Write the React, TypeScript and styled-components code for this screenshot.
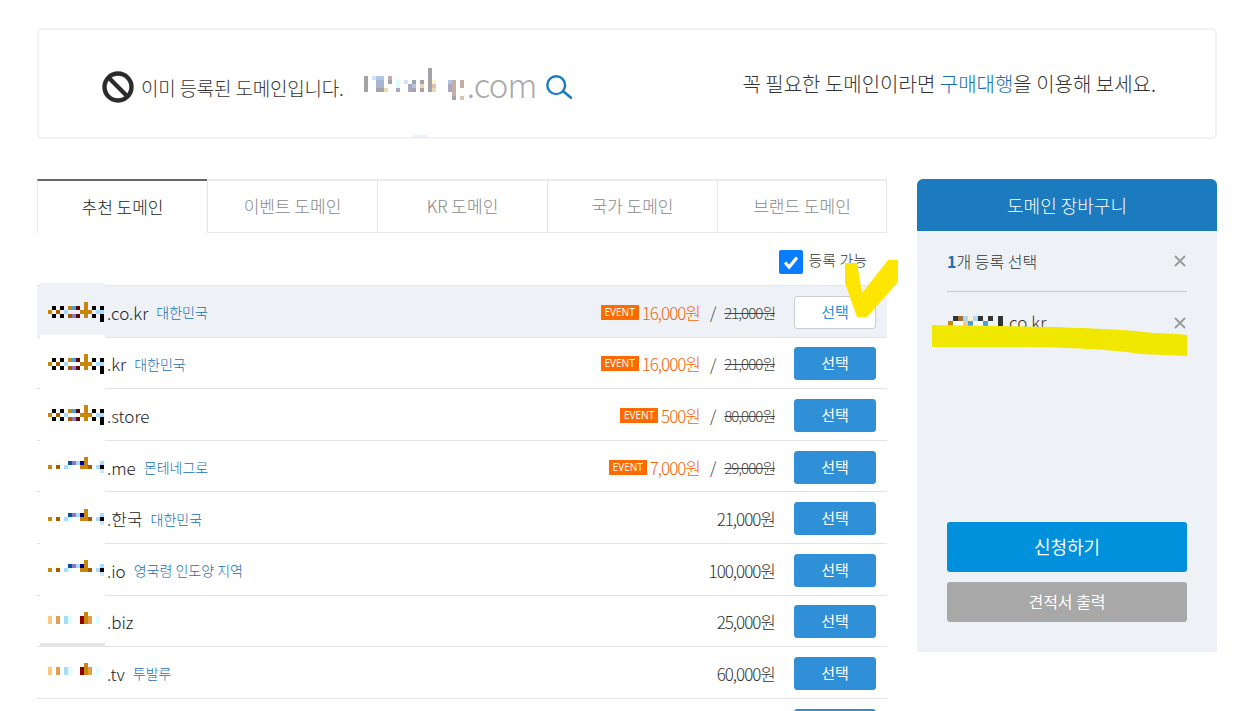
import React from "react";
import styled, { createGlobalStyle } from "styled-components";

const Global = createGlobalStyle`
  html, body { margin: 0; padding: 0; height: 711px; overflow: hidden; background: #fff; }
  body { font-family: "Noto Sans CJK KR", "Noto Sans", sans-serif; font-weight: 300; color: #333; }
  * { box-sizing: border-box; }
`;

const Page = styled.div`
  position: relative;
  padding: 28px 30px 0 37px;
`;
const Notice = styled.section`
  position: relative;
  height: 111px;
  border: 2px solid #f0f3f6;
  border-radius: 5px;
  display: flex;
  align-items: center;
  justify-content: space-between;
  padding: 0 59px 0 63px;
`;
const Nub = styled.span`
  position: absolute;
  left: 373px;
  bottom: -2px;
  width: 16px;
  height: 4px;
  background: #eef2f6;
  border-radius: 3px 3px 0 0;
`;
const NoticeLeft = styled.div`
  display: flex;
  align-items: center;
  padding-top: 7px;
`;
const NoticeText = styled.span`
  font-size: 19px;
  letter-spacing: -0.2px;
  color: #333;
  margin-left: 7px;
  margin-right: 20px;
  padding-top: 1px;
`;
const DomainTld = styled.span`
  font-size: 33px;
  letter-spacing: -0.8px;
  line-height: 38px;
  color: #aaa;
  margin: 0 10px 6px -9px;
`;
const SearchIcon = styled.svg`
  flex: none;
`;
const NoticeRight = styled.p`
  margin: 0;
  font-size: 20px;
  color: #333;
`;
const Link = styled.span`
  color: #1670b0;
`;
const Main = styled.div`
  display: flex;
  gap: 30px;
  margin-top: 40px;
  align-items: flex-start;
`;
const Left = styled.div`
  width: 850px;
`;
const Tabs = styled.div`
  display: flex;
  height: 54px;
  border-top: 2px solid #ebebeb;
`;
const Tab = styled.div<{ $active?: boolean }>`
  position: relative;
  width: 170px;
  display: flex;
  align-items: center;
  justify-content: center;
  margin-top: ${(p) => (p.$active ? "-2px" : "0")};
  border-top: ${(p) => (p.$active ? "2px solid #666" : "none")};
  border-left: 1px solid #e6e6e6;
  border-bottom: ${(p) => (p.$active ? "none" : "1px solid #e6e6e6")};
  font-size: 17px;
  color: ${(p) => (p.$active ? "#222" : "#888")};
  padding-bottom: 2px;
  &:last-child { border-right: 1px solid #e6e6e6; }
`;
const Filter = styled.div`
  height: 52px;
  display: flex;
  align-items: center;
  justify-content: flex-end;
  padding: 6px 20px 0 0;
  gap: 5px;
`;
const Check = styled.span`
  width: 24px;
  height: 24px;
  background: #0a7cff;
  border-radius: 2px;
  display: flex;
  align-items: center;
  justify-content: center;
`;
const FilterLabel = styled.span`
  font-size: 15px;
  color: #333;
  margin-bottom: 5px;
`;
const List = styled.div`
  border-top: 1px solid #e4e6ea;
`;
const Row = styled.div<{ $selected?: boolean }>`
  position: relative;
  height: 51.6px;
  display: flex;
  align-items: center;
  border-bottom: 1px solid #e3e3e3;
  padding: 2px 11px 0 11px;
  background: ${(p) => (p.$selected ? "#eef1f6" : "#fff")};
`;
const Patch = styled.span<{ $selected?: boolean; $band?: boolean }>`
  position: absolute;
  left: 3px;
  top: -3px;
  width: 65px;
  height: ${(p) => (p.$band ? "54px" : "52px")};
  background: ${(p) => (p.$selected ? "#eef1f6" : "#fff")};
  border-bottom: ${(p) => (p.$band ? "4px solid #e4e4e4" : "none")};
`;
const DomainWrap = styled.div`
  position: relative;
  display: flex;
  align-items: center;
  flex: 1;
`;
const Mosaic = styled.svg`
  display: block;
  flex: none;
  shape-rendering: crispEdges;
`;
const RowMosaic = styled(Mosaic)`
  margin-right: -1px;
`;
const TopMosaic = styled(Mosaic)`
  margin-bottom: 7px;
`;
const CartMosaic = styled(Mosaic)`
  margin: 0 -3px 4px 1px;
`;
const Tld = styled.span`
  font-size: 17px;
  color: #222;
`;
const Country = styled.span`
  font-size: 14px;
  color: #1670b0;
  margin-left: 8px;
`;
const PriceWrap = styled.div`
  position: relative;
  display: flex;
  align-items: center;
`;
const Badge = styled.span`
  width: 38px;
  height: 15px;
  background: #ff6b00;
  color: #fff;
  font-size: 10px;
  line-height: 15px;
  text-align: center;
  margin-right: 3px;
  font-weight: 400;
  font-family: "Noto Sans", sans-serif;
`;
const Price = styled.span`
  font-size: 17px;
  letter-spacing: -1px;
  color: #f5660a;
`;
const Plain = styled.span`
  font-size: 17px;
  letter-spacing: -1px;
  color: #333;
`;
const Slash = styled.span`
  font-size: 16px;
  color: #333;
  margin: 0 8px 0 10px;
`;
const Old = styled.span`
  font-size: 15px;
  letter-spacing: -1px;
  color: #444;
  text-decoration: line-through;
`;
const Select = styled.button<{ $selected?: boolean }>`
  width: 82px;
  height: 33px;
  margin-left: 19px;
  border-radius: 3px;
  border: 1px solid ${(p) => (p.$selected ? "#ccc" : "#2f90d8")};
  background: ${(p) => (p.$selected ? "#fff" : "#2f90d8")};
  color: ${(p) => (p.$selected ? "#2f90d8" : "#fff")};
  font: 400 15px "Noto Sans CJK KR", sans-serif;
  padding: 0 0 2px;
`;
const Cart = styled.aside`
  width: 300px;
  height: 473px;
  background: #eef1f6;
  border-radius: 6px 6px 0 0;
  overflow: hidden;
  display: flex;
  flex-direction: column;
`;
const CartHead = styled.div`
  height: 52px;
  background: #1c7bbf;
  color: #fff;
  font-size: 18px;
  display: flex;
  align-items: center;
  justify-content: center;
`;
const CartBody = styled.div`
  flex: 1;
  padding: 0 30px 30px;
  display: flex;
  flex-direction: column;
`;
const CartLine = styled.div<{ $rule?: boolean }>`
  display: flex;
  align-items: center;
  justify-content: space-between;
  height: ${(p) => (p.$rule ? "61px" : "62px")};
  border-bottom: ${(p) => (p.$rule ? "1px solid #ccc" : "none")};
  color: #333;
`;
const CartCount = styled.span`
  font-size: 16px;
  margin-bottom: 1px;
  b { color: #1c6fb0; font-weight: 700; }
`;
const CartDomain = styled.span`
  display: flex;
  align-items: center;
  font-size: 17px;
  color: #333;
`;
const CartTld = styled.span`
  margin-bottom: 4px;
`;
const Actions = styled.div`
  margin-top: auto;
  display: flex;
  flex-direction: column;
  gap: 10px;
`;
const Apply = styled.button`
  height: 50px;
  border: none;
  border-radius: 3px;
  background: #0090dc;
  color: #fff;
  font: 400 18px "Noto Sans CJK KR", sans-serif;
  padding: 0 0 2px;
`;
const Quote = styled.button`
  height: 40px;
  border: none;
  border-radius: 3px;
  background: #a8a8a8;
  color: #fff;
  font: 400 16px "Noto Sans CJK KR", sans-serif;
  padding: 0 0 2px;
`;
const Scribble = styled.svg`
  position: absolute;
  left: 0;
  top: 0;
  pointer-events: none;
`;

const palette: Record<string, string> = {
  k: "#050505", o: "#c8860a", b: "#a85a00", l: "#a8dcff", p: "#8a78c0", d: "#5a0808",
  B: "#4a9fe0", n: "#0a50a0", N: "#000080", y: "#fffde0", f: "#ffc880", g: "#e0a050",
  r: "#8b0000", c: "#dcffff", h: "#a3a3a8", s: "#b0c6e6", v: "#a4b6d2", t: "#fff0d0",
  e: "#f4d4b4", a: "#a8a8c0", j: "#c4aea6", m: "#d8c4b4", i: "#cfe4fa", x: "#333", z: "#a87038",
  w: "#fff",
};

function Pixels({ rows, as: C = Mosaic, cell = 4 }: { rows: string[]; as?: typeof Mosaic; cell?: number }) {
  const width = rows[0].length * cell;
  const height = rows.length * cell;
  const cells: React.ReactNode[] = [];
  rows.forEach((r, y) =>
    r.split("").forEach((ch, x) => {
      if (palette[ch]) cells.push(<rect key={`${x}-${y}`} x={x * cell} y={y * cell} width={cell} height={cell} fill={palette[ch]} />);
    })
  );
  return (
    <C width={width} height={height} viewBox={`0 0 ${width} ${height}`}>
      {cells}
    </C>
  );
}

const A = [
  ".........o.....",
  ".k.k.oBd.o.k.k.",
  "o.b.l...ooo.ll.",
  ".k.k.bpd.o.k.k.",
  ".............k.",
];
const B = [
  ".........o.....",
  "..y..nplNo...l.",
  "o.b.lc..oob.lk.",
  ".............i.",
  "...............",
];
const C = [
  ".........o.....",
  "f.g.lc..rog.c..",
  "f.g.lc..rog.c..",
  "...............",
  "...............",
];

const top = [
  "................h...........",
  "................h...........",
  "h.iss.j.........h...........",
  "h..vv.h.c.i.h.h.ht...sj.j...",
  "h..vv...c..as.e.hm...aj.j...",
  "h..hhe..a..ah.h.he...aj.....",
  "......................j.....",
  "......................h.m...",
];

const cartPx = [
  ".xzltlx.x.x.",
  "owwfBwwB..x.",
];

const rows = [
  { px: A, tld: ".co.kr", country: "대한민국", event: true, price: "16,000원", old: "21,000원", selected: true },
  { px: A, tld: ".kr", country: "대한민국", event: true, price: "16,000원", old: "21,000원" },
  { px: A, tld: ".store", event: true, price: "500원", old: "80,000원" },
  { px: B, tld: ".me", country: "몬테네그로", event: true, price: "7,000원", old: "29,000원" },
  { px: B, tld: ".한국", country: "대한민국", price: "21,000원" },
  { px: B, tld: ".io", country: "영국령 인도양 지역", price: "100,000원" },
  { px: C, tld: ".biz", price: "25,000원", band: true },
  { px: C, tld: ".tv", country: "투발루", price: "60,000원", bare: true },
];

const X = () => (
  <svg width="14" height="14" viewBox="0 0 14 14">
    <path d="M2 2 L12 12 M12 2 L2 12" stroke="#9a9a9a" strokeWidth="1.8" fill="none" />
  </svg>
);

type RowData = (typeof rows)[number] & { selected?: boolean; band?: boolean; bare?: boolean; event?: boolean; old?: string; country?: string };

const DomainRow = ({ r }: { r: RowData }) => (
  <Row $selected={r.selected}>
    {!r.bare && <Patch $selected={r.selected} $band={r.band} />}
    <DomainWrap>
      <Pixels rows={r.px} as={RowMosaic} />
      <Tld>{r.tld}</Tld>
      {r.country && <Country>{r.country}</Country>}
    </DomainWrap>
    <PriceWrap>
      {r.event && <Badge>EVENT</Badge>}
      {r.old ? <Price>{r.price}</Price> : <Plain>{r.price}</Plain>}
      {r.old && <Slash>/</Slash>}
      {r.old && <Old>{r.old}</Old>}
    </PriceWrap>
    <Select $selected={r.selected}>선택</Select>
  </Row>
);

export default function App() {
  return (
    <Page>
      <Global />
      <Notice>
        <NoticeLeft>
          <svg width="32" height="32" viewBox="0 0 32 32">
            <circle cx="16" cy="16" r="13.5" fill="none" stroke="#2b2b2b" strokeWidth="4.4" />
            <path d="M6.5 6.5 L25.5 25.5" stroke="#2b2b2b" strokeWidth="4.4" />
          </svg>
          <NoticeText>이미 등록된 도메인입니다.</NoticeText>
          <Pixels rows={top} as={TopMosaic} />
          <DomainTld>.com</DomainTld>
          <SearchIcon width="26" height="24" viewBox="0 0 26 24">
            <circle cx="10.2" cy="10.2" r="8.9" fill="none" stroke="#1b7bbf" strokeWidth="2.4" />
            <path d="M17.5 16.5 L25 22.8" stroke="#1b7bbf" strokeWidth="2.6" strokeLinecap="round" />
          </SearchIcon>
        </NoticeLeft>
        <NoticeRight>
          꼭 필요한 도메인이라면 <Link>구매대행</Link>을 이용해 보세요.
        </NoticeRight>
        <Nub />
      </Notice>
      <Main>
        <Left>
          <Tabs>
            <Tab $active>추천 도메인</Tab>
            <Tab>이벤트 도메인</Tab>
            <Tab>KR 도메인</Tab>
            <Tab>국가 도메인</Tab>
            <Tab>브랜드 도메인</Tab>
          </Tabs>
          <Filter>
            <Check>
              <svg width="18" height="18" viewBox="0 0 18 18">
                <path d="M3 9.5 L7.2 14 L15 4.5" fill="none" stroke="#fff" strokeWidth="3.2" />
              </svg>
            </Check>
            <FilterLabel>등록 가능</FilterLabel>
          </Filter>
          <List>
            {rows.map((r, i) => (
              <DomainRow key={i} r={r as RowData} />
            ))}
            <Row>
              <DomainWrap />
              <Select aria-label="선택" />
            </Row>
          </List>
        </Left>
        <Cart>
          <CartHead>도메인 장바구니</CartHead>
          <CartBody>
            <CartLine $rule>
              <CartCount>
                <b>1</b>개 등록 선택
              </CartCount>
              <X />
            </CartLine>
            <CartLine>
              <CartDomain>
                <Pixels rows={cartPx} as={CartMosaic} cell={5} />
                <CartTld>.co.kr</CartTld>
              </CartDomain>
              <X />
            </CartLine>
            <Actions>
              <Apply>신청하기</Apply>
              <Quote>견적서 출력</Quote>
            </Actions>
          </CartBody>
        </Cart>
      </Main>
      <Scribble width="1247" height="711" viewBox="0 0 1247 711">
        <path d="M845 263 L857 263 L862 293 L888 260 L898 260 L898 282 L867 317 L857 317 L845 283 Z" fill="#ffe600" />
        <path d="M932 325 C1000 326 1100 327 1143 332 C1160 334 1175 333 1187 335 L1187 356 L1140 354 C1110 349 1060 347 1000 347 L932 347 Z" fill="#f0e800" />
      </Scribble>
    </Page>
  );
}
